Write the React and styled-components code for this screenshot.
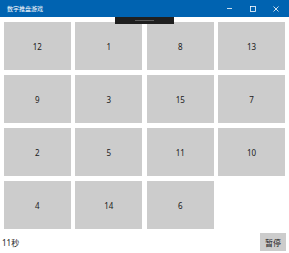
import React, { useState } from "react";
import styled, { createGlobalStyle } from "styled-components";

const GlobalStyle = createGlobalStyle`
  html, body {
    margin: 0;
    padding: 0;
    background: #ffffff;
    overflow: hidden;
  }
  body {
    font-family: "Noto Sans", "Noto Sans CJK SC", sans-serif;
  }
`;

const Window = styled.div`
  position: relative;
  width: 289px;
  height: 253px;
  display: flex;
  flex-direction: column;
  background: #ffffff;
`;

const TitleBar = styled.div`
  height: 17px;
  background: #0063b1;
  display: flex;
  align-items: center;
  justify-content: space-between;
  color: #ffffff;
`;

const Title = styled.span`
  font-size: 6px;
  padding-left: 7px;
  line-height: 1;
`;

const Controls = styled.div`
  display: flex;
  align-items: center;
  height: 100%;
  padding-right: 2px;
`;

const ControlButton = styled.div`
  width: 23px;
  height: 100%;
  display: flex;
  align-items: center;
  justify-content: center;
`;

const DragHandle = styled.div`
  position: absolute;
  left: 115px;
  top: 17px;
  width: 59px;
  height: 7px;
  background: #1f1f1f;
  display: flex;
  align-items: center;
  justify-content: center;
  z-index: 2;

  &::after {
    content: "";
    width: 19px;
    height: 1px;
    background: #5a5a5a;
  }
`;

const Board = styled.div`
  display: grid;
  grid-template-columns: repeat(4, 1fr);
  grid-auto-rows: 48px;
  column-gap: 4.7px;
  row-gap: 5px;
  padding: 5px 4px 0 4px;
`;

const Tile = styled.div`
  background: ${(p) => (p.$empty ? "transparent" : "#cccccc")};
  display: flex;
  align-items: center;
  justify-content: center;
  font-size: 8px;
  color: #1a1a1a;
`;

const Footer = styled.div`
  display: flex;
  align-items: center;
  justify-content: space-between;
  padding: 4px 3px 0 2px;
`;

const Timer = styled.span`
  font-size: 8px;
  color: #1a1a1a;
`;

const PauseButton = styled.button`
  width: 26px;
  height: 18px;
  border: none;
  padding: 0;
  background: #cccccc;
  color: #1a1a1a;
  font-family: "Noto Sans CJK SC", sans-serif;
  font-size: 8px;
`;

const tiles = [12, 1, 8, 13, 9, 3, 15, 7, 2, 5, 11, 10, 4, 14, 6, null];

const App = () => {
  const [seconds] = useState(11);

  return (
    <Window>
      <GlobalStyle />
      <TitleBar>
        <Title>数字推盘游戏</Title>
        <Controls>
          <ControlButton>
            <svg width="5" height="5" viewBox="0 0 5 5">
              <line x1="0" y1="2.5" x2="5" y2="2.5" stroke="#fff" strokeWidth="0.8" />
            </svg>
          </ControlButton>
          <ControlButton>
            <svg width="6" height="6" viewBox="0 0 6 6">
              <rect x="0.5" y="0.5" width="5" height="5" fill="none" stroke="#fff" strokeWidth="0.8" />
            </svg>
          </ControlButton>
          <ControlButton>
            <svg width="6" height="6" viewBox="0 0 6 6">
              <path d="M0.5 0.5 L5.5 5.5 M5.5 0.5 L0.5 5.5" stroke="#fff" strokeWidth="0.8" />
            </svg>
          </ControlButton>
        </Controls>
      </TitleBar>
      <DragHandle />
      <Board>
        {tiles.map((n, idx) => (
          <Tile key={idx} $empty={n === null}>
            {n}
          </Tile>
        ))}
      </Board>
      <Footer>
        <Timer>{seconds}秒</Timer>
        <PauseButton>暂停</PauseButton>
      </Footer>
    </Window>
  );
};

export default App;
